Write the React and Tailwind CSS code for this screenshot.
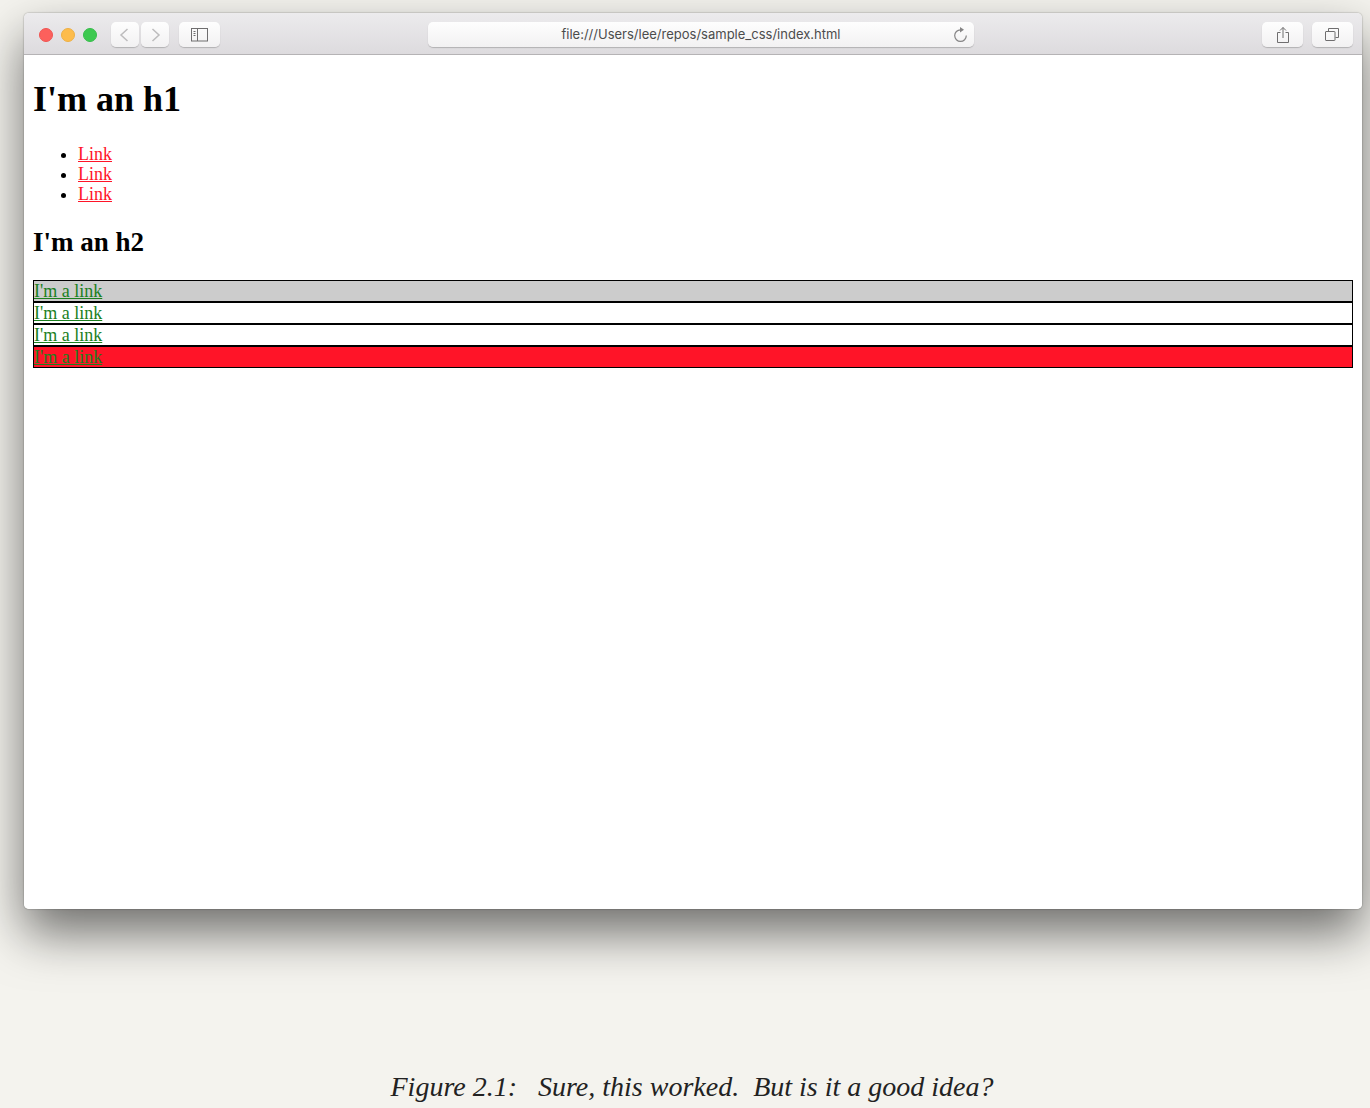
import React from "react";

const toolButton =
  "flex h-[25px] items-center justify-center rounded-[5px] bg-linear-to-b from-[#fefefe] to-[#f2f1f2] shadow-[0_1px_1px_rgba(0,0,0,0.2)]";

function Chevron({ d, label }) {
  return (
    <button type="button" aria-label={label} className={`${toolButton} w-[28px]`}>
      <svg width="12" height="16" viewBox="0 0 12 16" fill="none" stroke="#bdbcbd" strokeWidth="1.5">
        <path d={d} />
      </svg>
    </button>
  );
}

function Toolbar() {
  return (
    <header className="flex h-[42px] items-center rounded-t-[5px] border-b border-[#b5b3b5] bg-linear-to-b from-[#ecebed] to-[#dddbde] pt-[2px] pr-[9px] pl-[15px]">
      <div className="flex flex-1 items-center">
        <div className="flex gap-[8px]">
          <button type="button" aria-label="Close" className="size-[14px] rounded-full border border-[#f05552] bg-[#fc605c]" />
          <button type="button" aria-label="Minimize" className="size-[14px] rounded-full border border-[#eeb044] bg-[#fdbc4b]" />
          <button type="button" aria-label="Zoom" className="size-[14px] rounded-full border border-[#36bd4b] bg-[#3dc950]" />
        </div>
        <div className="ml-[14px] flex gap-[2px]">
          <Chevron label="Back" d="M8.5 2 2 8l6.5 6" />
          <Chevron label="Forward" d="M3.5 2 10 8l-6.5 6" />
        </div>
        <button type="button" aria-label="Show sidebar" className={`${toolButton} ml-[10px] w-[41px]`}>
          <svg width="18" height="14" viewBox="0 0 18 14" fill="none" stroke="#6f6e6f">
            <rect x="0.5" y="0.5" width="16" height="12.5" />
            <path d="M6.5 .5v12.5M2.5 3.5h2M2.5 5.5h2M2.5 7.5h2" />
          </svg>
        </button>
      </div>
      <div className={`${toolButton} ml-[10px] w-5/12 max-w-[546px] min-w-0 pr-[6px] pl-[21px]`}>
        <input
          aria-label="Address"
          readOnly
          value="file:///Users/lee/repos/sample_css/index.html"
          className="min-w-0 flex-1 bg-transparent text-center font-['Inter','Liberation_Sans',sans-serif] text-[13px] text-[#4c4c4c] outline-none"
        />
        <button type="button" aria-label="Reload" className="flex">
          <svg width="15" height="16" viewBox="0 0 15 16" fill="none" stroke="#858485" strokeWidth="1.2">
            <path d="M8.5 2.800H7.500a5.800 5.800 0 1 0 5.800 5.800" />
            <path d="M7 0 11 2.800 7 5.600Z" fill="#858485" stroke="none" />
          </svg>
        </button>
      </div>
      <div className="flex flex-1 justify-end gap-[9px]">
        <button type="button" aria-label="Share" className={`${toolButton} w-[41px]`}>
          <svg width="14" height="18" viewBox="0 0 14 18" fill="none" stroke="#6f6e6f">
            <path d="M4.5 6.500h-3v10h11v-10h-3M7 12V1.500M4 4.500l3-3 3 3" />
          </svg>
        </button>
        <button type="button" aria-label="Show tabs" className={`${toolButton} w-[41px]`}>
          <svg width="15" height="15" viewBox="0 0 15 15" fill="none" stroke="#6f6e6f">
            <rect x="0.5" y="4.5" width="9.500" height="9" rx="0.5" />
            <path d="M3.500 4V1.500h10v9H10.500" />
          </svg>
        </button>
      </div>
    </header>
  );
}

const rows = ["bg-[#cccccc]", "bg-white", "bg-white", "bg-[#ff1428]"];

export default function App() {
  return (
    <figure className="min-h-screen overflow-hidden bg-[#f4f3ee] pt-[13px] font-['Liberation_Serif',serif]">
      <div className="mr-[8px] ml-[24px] rounded-[5px] shadow-[0_0_1px_1px_rgba(0,0,0,0.12),0_24px_50px_rgba(0,0,0,0.55)]">
        <Toolbar />
        <main className="min-h-[854px] rounded-b-[5px] bg-white px-[9px] pt-[23px] text-[18px] leading-[20px] text-black">
          <h1 className="text-[36px] leading-[42px] font-bold">I'm an h1</h1>
          <ul className="mt-[24px] list-disc pl-[45px]">
            {[0, 1, 2].map((i) => (
              <li key={i}>
                <a href="#link" className="text-[#ff1428] underline">Link</a>
              </li>
            ))}
          </ul>
          <h2 className="mt-[22px] mb-[22px] text-[27px] leading-[32px] font-bold">I'm an h2</h2>
          {rows.map((color, i) => (
            <div key={i} className={`border border-black ${color}`}>
              <a href="#link" className="text-[#1b801e] underline">I'm a link</a>
            </div>
          ))}
        </main>
      </div>
      <figcaption className="mt-[162px] pl-[14px] text-center font-['Georgia','Liberation_Serif',serif] text-[28px] leading-[32px] whitespace-pre-wrap text-[#222222] italic">
        {"Figure 2.1:   Sure, this worked.  But is it a good idea?"}
      </figcaption>
    </figure>
  );
}
